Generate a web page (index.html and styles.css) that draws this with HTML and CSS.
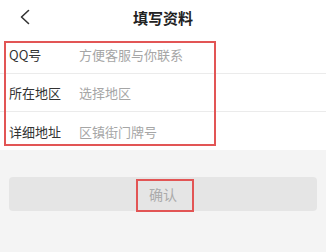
FILE: index.html
```html
<!DOCTYPE html>
<html lang="zh-CN">
<head>
<meta charset="utf-8">
<title>填写资料</title>
<link rel="stylesheet" href="styles.css">
</head>
<body>
<div class="page">
  <header class="header">
    <svg class="back" width="12" height="16" viewBox="0 0 12 16">
      <path d="M9.5 1.5 L2.5 8 L9.5 14.5" fill="none" stroke="#333" stroke-width="1.6" stroke-linecap="round" stroke-linejoin="round"/>
    </svg>
    <h1 class="title">填写资料</h1>
  </header>
  <section class="form">
    <div class="row"><span class="label">QQ号</span><span class="ph">方便客服与你联系</span></div>
    <div class="row"><span class="label">所在地区</span><span class="ph">选择地区</span></div>
    <div class="row last"><span class="label">详细地址</span><span class="ph">区镇街门牌号</span></div>
    <div class="mark mark-form"></div>
  </section>
  <div class="btn-wrap">
    <div class="btn">确认<div class="mark mark-btn"></div></div>
  </div>
</div>
</body>
</html>
```
FILE: styles.css
```css
html, body {
  margin: 0;
  padding: 0;
}
body {
  background: #f4f4f4;
  font-family: "Noto Sans CJK SC", "Noto Sans", sans-serif;
  width: 326px;
  height: 252px;
  overflow: hidden;
}
.page {
  display: flex;
  flex-direction: column;
}
.header {
  position: relative;
  height: 36px;
  background: #fff;
  display: flex;
  align-items: center;
  justify-content: center;
}
.back {
  position: absolute;
  left: 19px;
  top: 9px;
}
.title {
  margin: 0;
  font-size: 15px;
  font-weight: 700;
  color: #222;
  line-height: 20px;
}
.form {
  position: relative;
  background: #fff;
  display: flex;
  flex-direction: column;
}
.row {
  height: 37px;
  border-bottom: 1px solid #ebebeb;
  display: flex;
  align-items: center;
  padding-left: 9px;
  font-size: 13px;
  line-height: 18px;
}
.row.last {
  border-bottom: 0;
  padding-top: 1px;
}
.label {
  width: 70px;
  color: #333;
}
.ph {
  color: #a6a6a6;
}
.mark {
  position: absolute;
  border: 2px solid #e25555;
  box-sizing: border-box;
}
.mark-form {
  left: 4px;
  top: 5px;
  width: 212px;
  height: 105px;
}
.btn-wrap {
  padding: 27px 9px 0;
}
.btn {
  position: relative;
  height: 34px;
  border-radius: 4px;
  background: #e5e5e5;
  color: #ababab;
  font-size: 14px;
  display: flex;
  align-items: center;
  justify-content: center;
}
.mark-btn {
  left: 127px;
  top: 2px;
  width: 58px;
  height: 33px;
}
```
